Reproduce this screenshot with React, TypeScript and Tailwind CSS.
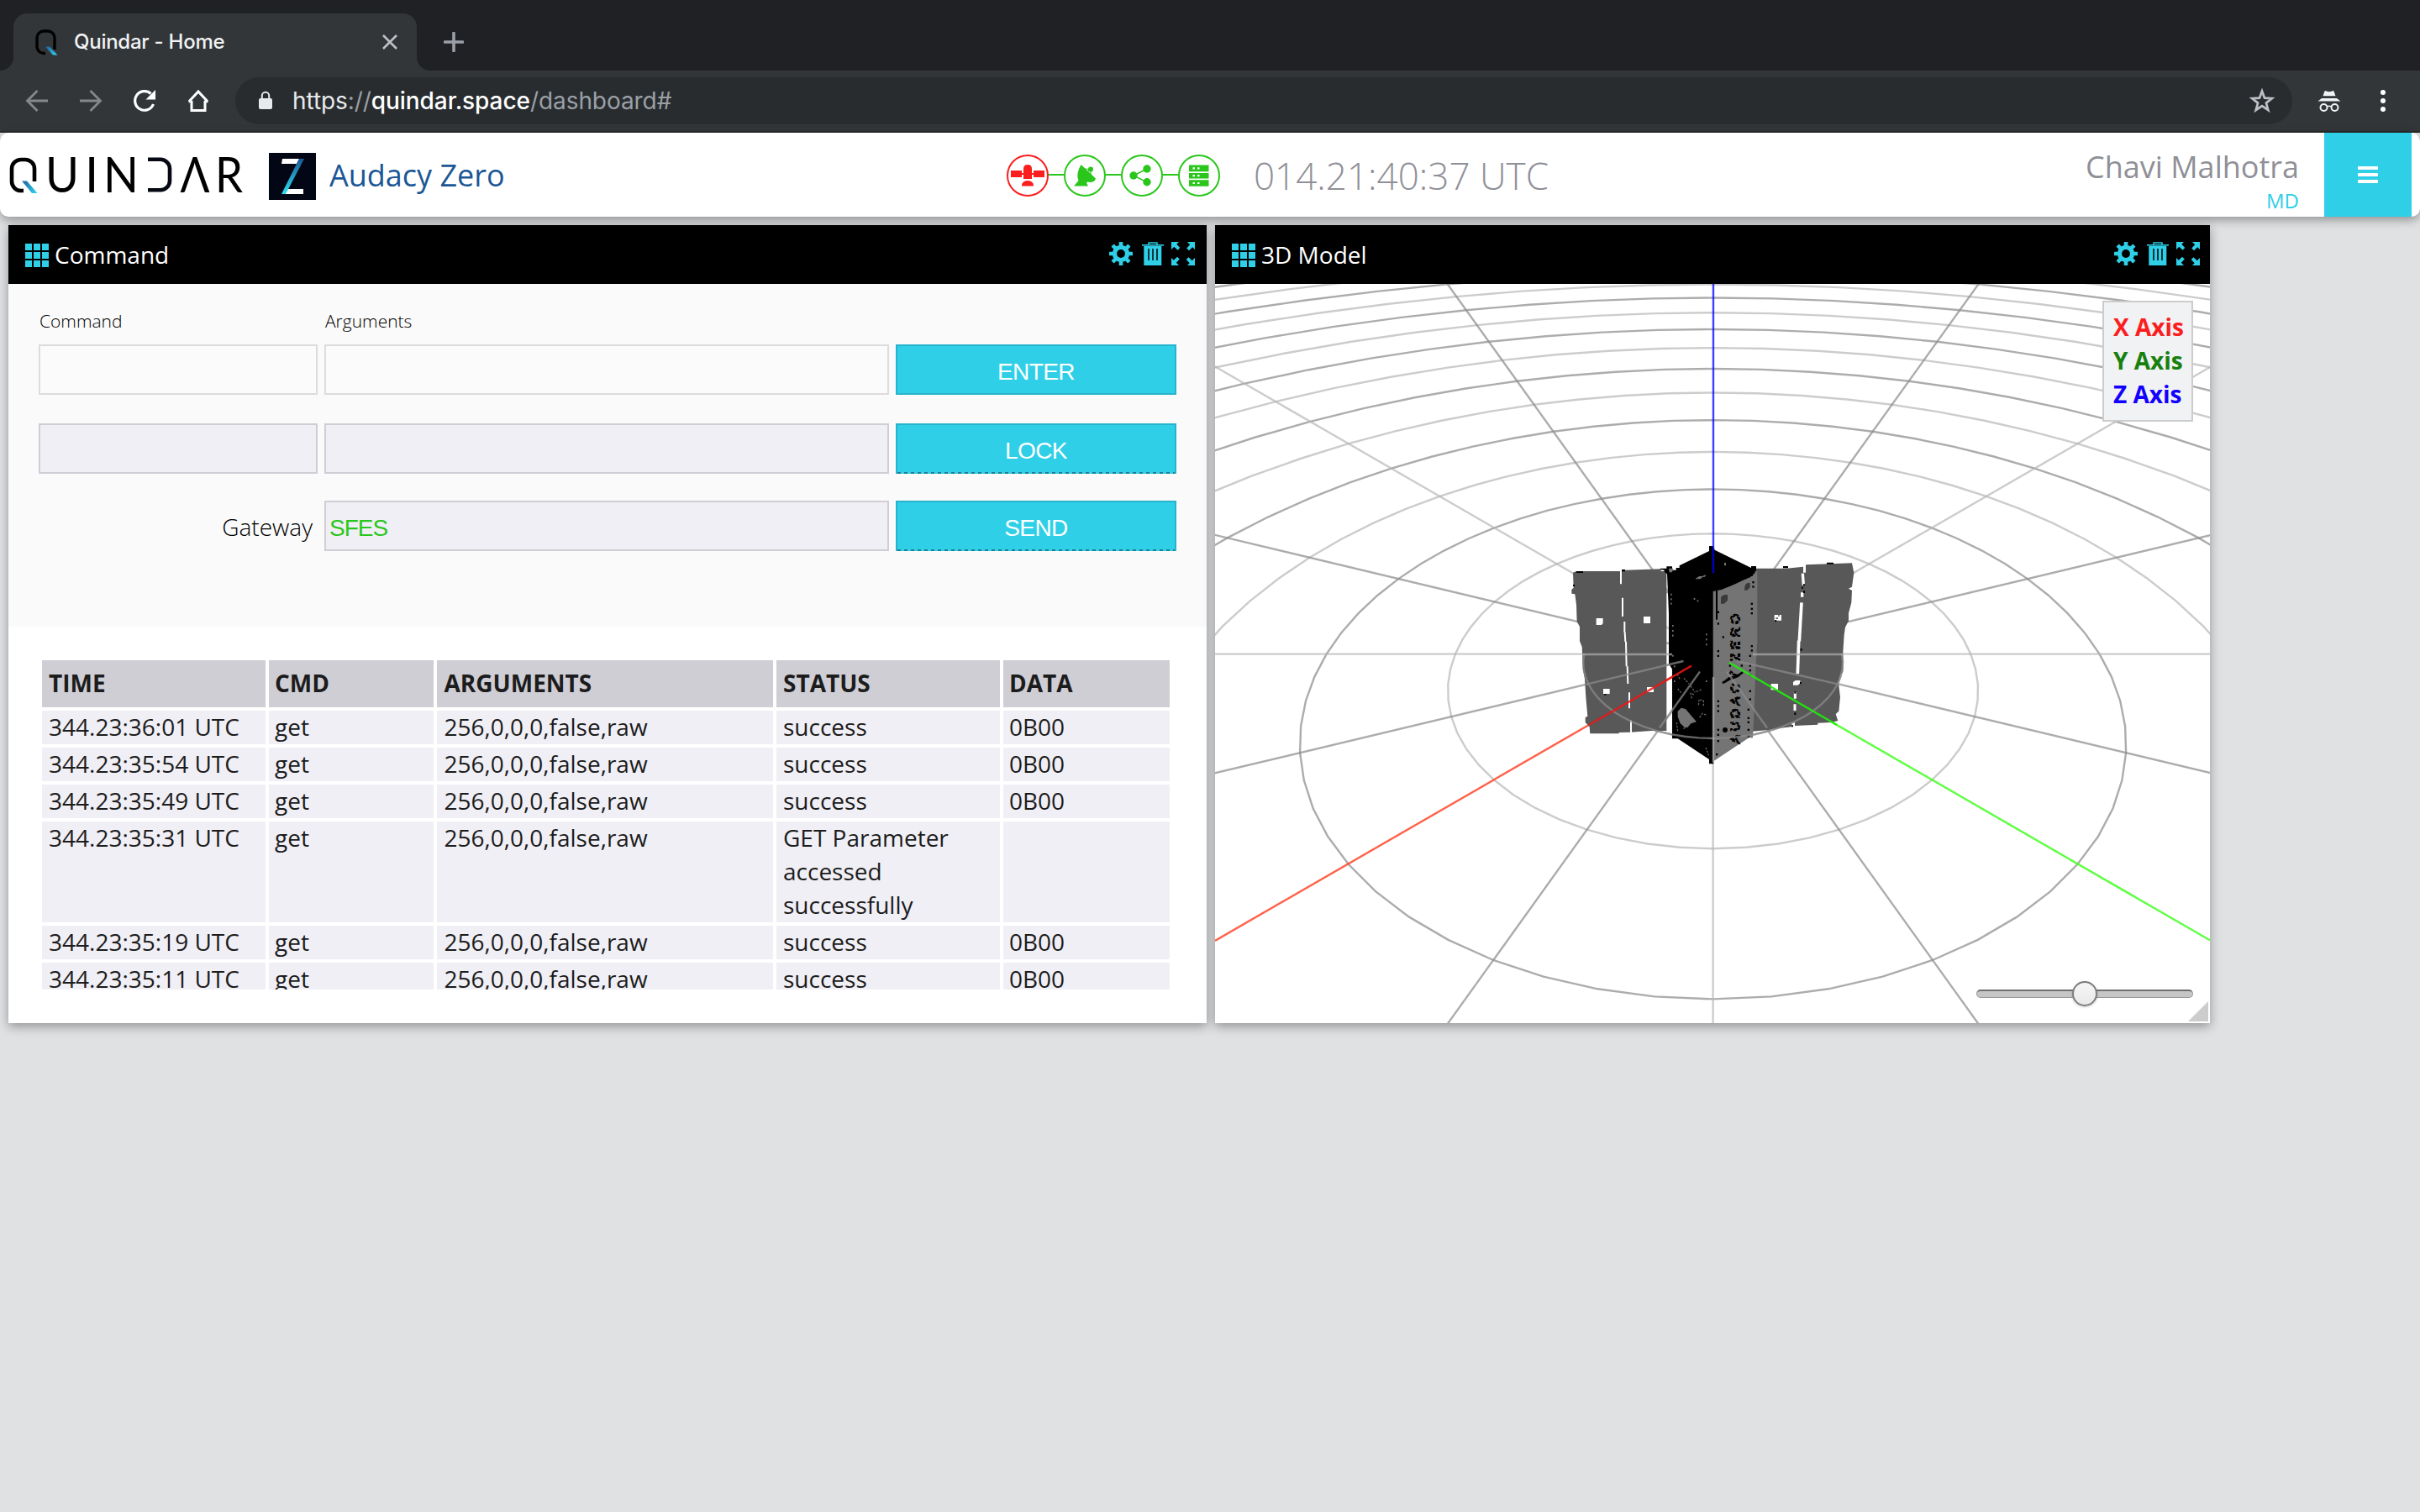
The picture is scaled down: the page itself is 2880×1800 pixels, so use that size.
import React from "react";

const CYAN = "#2fcfe8";

/* ---------- browser chrome ---------- */

function BrowserChrome() {
  return (
    <div className="flex h-[158px] flex-col border-b-2 border-[#27292b] bg-[#323639] font-[Inter,sans-serif]">
      <div className="flex h-[84px] items-end bg-[#202124]">
        <div className="h-4 w-4 bg-[#323639]">
          <div className="h-4 w-4 rounded-br-[16px] bg-[#202124]" />
        </div>
        <div className="flex h-[68px] w-[480px] items-center rounded-t-[16px] bg-[#323639] pl-[24px] pr-[22px]">
          <svg width="30" height="32" viewBox="0 0 30 32">
            <defs>
              <linearGradient id="tail" x1="0" y1="0" x2="1" y2="1">
                <stop offset="0" stopColor="#1d5f9f" />
                <stop offset="1" stopColor="#2fd8f0" />
              </linearGradient>
            </defs>
            <path
              d="M14 29.5h-2a8 8 0 0 1-8-8V11a8 8 0 0 1 8-8h5a8 8 0 0 1 8 8v14"
              fill="none"
              stroke="#000"
              strokeWidth="3.4"
            />
            <path d="M14 21.5h5l9.500 10h-5.500z" fill="url(#tail)" />
          </svg>
          <span className="ml-[18px] text-[24px] font-medium tracking-[-0.25px] text-[#f1f3f4]">Quindar - Home</span>
          <svg className="ml-auto" width="20" height="20" viewBox="0 0 20 20">
            <path d="M2 2l16 16M18 2L2 18" stroke="#bdc1c6" strokeWidth="2.6" />
          </svg>
        </div>
        <div className="h-4 w-4 bg-[#323639]">
          <div className="h-4 w-4 rounded-bl-[16px] bg-[#202124]" />
        </div>
        <svg className="mb-[22px] ml-4" width="24" height="24" viewBox="0 0 24 24">
          <path d="M12 1.500v21M1.500 12h21" stroke="#9aa0a6" strokeWidth="3.600" strokeLinecap="round" />
        </svg>
      </div>
      <div className="flex h-[72px] items-center">
        <div className="flex w-[280px] gap-[36px] pl-[30px]">
          <svg width="28" height="28" viewBox="0 0 28 28" fill="none" stroke="#85888b" strokeWidth="2.800">
            <path d="M27 14H3M14.500 2L2.500 14l12 12" />
          </svg>
          <svg width="28" height="28" viewBox="0 0 28 28" fill="none" stroke="#85888b" strokeWidth="2.800">
            <path d="M1 14h24M13.500 2l12 12-12 12" />
          </svg>
          <svg width="28" height="28" viewBox="0 0 28 28">
            <path d="M24.500 18A11.300 11.300 0 1 1 21.500 5.500" fill="none" stroke="#fff" strokeWidth="3.200" />
            <path d="M27 1v11.500H15.500z" fill="#fff" />
          </svg>
          <svg width="28" height="28" viewBox="0 0 28 28" fill="none" stroke="#fff" strokeWidth="3">
            <path d="M6 14v11.500h16V14M2.500 14.800h4M21.500 14.800h4M3 14.800L14 3l11 11.800" />
          </svg>
        </div>
        <div className="flex h-[56px] w-[2448px] items-center rounded-full bg-[#282c2f] pl-[27px] pr-[20px]">
          <svg width="18" height="24" viewBox="0 0 18 24">
            <rect x="1" y="9" width="16" height="13" rx="2" fill="#e8eaed" />
            <path d="M4.800 10V6a4.200 4.200 0 0 1 8.400 0v4" fill="none" stroke="#e8eaed" strokeWidth="2" />
          </svg>
          <div className="ml-[23px] text-[28px] tracking-[-0.07px] text-[#9aa0a6]">
            <span className="text-[#e8eaed]">https</span>://
            <span className="font-medium text-white">quindar.space</span>/dashboard#
          </div>
          <svg className="ml-auto" width="32" height="32" viewBox="0 0 32 32">
            <path
              d="M16 4.500l3 8.200 8.800.4-6.900 5.500 2.400 8.400L16 22.200 8.700 27l2.400-8.400-6.900-5.500 8.800-.4z"
              fill="none"
              stroke="#bdc1c6"
              strokeWidth="2.700"
            />
          </svg>
        </div>
        <svg className="ml-[30px]" width="28" height="28" viewBox="0 0 28 28">
          <path d="M8.500 2.500q1-1 2 0q3.500 1.400 7 0q1-1 2 0l2 5.700h-15z" fill="#f1f3f4" />
          <path d="M5 11h18l4.500 3.500H.5z" fill="#f1f3f4" />
          <circle cx="7.500" cy="22" r="4" fill="none" stroke="#f1f3f4" strokeWidth="2" />
          <circle cx="20.500" cy="22" r="4" fill="none" stroke="#f1f3f4" strokeWidth="2" />
          <path d="M11 21q3-1.500 6 0" fill="none" stroke="#f1f3f4" strokeWidth="1.600" />
        </svg>
        <div className="ml-[47px] flex flex-col gap-1">
          <div className="h-[6px] w-[6px] rounded-full bg-white" />
          <div className="h-[6px] w-[6px] rounded-full bg-white" />
          <div className="h-[6px] w-[6px] rounded-full bg-white" />
        </div>
      </div>
    </div>
  );
}

/* ---------- application header ---------- */

function QuindarLogo() {
  return (
    <svg
      width="282"
      height="50"
      viewBox="8 184 282 50"
      className="block overflow-visible"
      fontFamily="Lato, sans-serif"
      fontSize="58"
    >
      <defs>
        <linearGradient id="qtail" x1="0" y1="0" x2="1" y2="1">
          <stop offset="0" stopColor="#1d5f9f" />
          <stop offset="1" stopColor="#2fd8f0" />
        </linearGradient>
      </defs>
      <path
        d="M28 227h-3a11 11 0 0 1-11-11V201a11 11 0 0 1 11-11h5a11 11 0 0 1 11 11v15"
        fill="none"
        stroke="#000"
        strokeWidth="4.600"
      />
      <path d="M26 215.500h6l12.500 14.500h-6.500z" fill="url(#qtail)" />
      <text x="54" y="229" textLength="40" lengthAdjust="spacingAndGlyphs">U</text>
      <text x="101" y="229">I</text>
      <text x="123" y="229" textLength="42" lengthAdjust="spacingAndGlyphs">N</text>
      <path d="M176 189.800h15a11 11 0 0 1 11 11v14.400a11 11 0 0 1-11 11h-15" fill="none" stroke="#060913" strokeWidth="4.600" />
      <text x="214.500" y="229" textLength="35" lengthAdjust="spacingAndGlyphs">Λ</text>
      <text x="256" y="229" textLength="33" lengthAdjust="spacingAndGlyphs">R</text>
    </svg>
  );
}

function ZeroLogo() {
  return (
    <svg width="56" height="56" viewBox="0 0 56 56" className="block">
      <defs>
        <linearGradient id="zbar" x1="0" y1="1" x2="0" y2="0">
          <stop offset="0" stopColor="#2fe0f2" />
          <stop offset="1" stopColor="#1b5796" />
        </linearGradient>
      </defs>
      <rect width="56" height="56" fill="#030615" />
      <path d="M16 7h20l-3 6H15zM22 43h19v6H19z" fill="#fff" />
      <path d="M36 7h6L20 49h-5z" fill="url(#zbar)" />
    </svg>
  );
}

function StatusDot({ red, children }: { red?: boolean; children: React.ReactNode }) {
  return (
    <div
      className={
        red
          ? "h-[50px] w-[50px] rounded-full border-2 border-[#fb1e1e] text-[#fb1e1e]"
          : "h-[50px] w-[50px] rounded-full border-2 border-[#2ac61c] text-[#2ac61c]"
      }
    >
      <svg width="46" height="46" viewBox="2 2 46 46" fill="currentColor" stroke="none">
        {children}
      </svg>
    </div>
  );
}

function Link() {
  return <div className="mb-[2px] h-[2px] w-[18px] bg-[#2ac61c]" />;
}

function AppHeader() {
  return (
    <header className="relative flex h-[100px] rounded-[10px] bg-white shadow-[0_4px_12px_rgba(0,0,0,0.35)]">
      <div className="flex w-[1198px] items-start pl-2">
        <div className="mt-[26px]"><QuindarLogo /></div>
        <div className="ml-[30px] mt-6"><ZeroLogo /></div>
        <span className="ml-4 mt-[26px] text-[36px] leading-[50px] text-[#1b5796]">Audacy Zero</span>
      </div>
      <div className="mt-[26px] flex h-[50px] items-center">
        <StatusDot red>
          <path d="M5 19h13v3h2v-5q0-5 5-5t5 5v5h2v-3h13v8H32v-3h-2v5H20v-5h-2v3H5z" />
          <path d="M18 37.500q0-6.500 7-6.500t7 6.500z" />
        </StatusDot>
        <Link />
        <StatusDot>
          <path d="M20.500 12L38 28.500Q37 33 31 33q-1.500 0-2.500-.4l-1.500.9 2 4H12l5.500-6.500Q14 23 20.500 12z" />
          <circle cx="32" cy="17.500" r="3" />
          <path d="M27 22l5-5v9M24 17l7 .5" stroke="currentColor" strokeWidth="1.200" fill="none" />
        </StatusDot>
        <Link />
        <StatusDot>
          <circle cx="15" cy="25" r="4.700" />
          <circle cx="31" cy="17" r="4.700" />
          <circle cx="31" cy="32.800" r="4.700" />
          <path d="M31 17L15 25l16 7.800" stroke="currentColor" strokeWidth="1.500" fill="none" />
        </StatusDot>
        <Link />
        <StatusDot>
          <path d="M13 12.500h23.500v7.700H13zM13 22h23.500v6.500H13zM13 30.300h23.500v7.500H13z" />
          <path
            d="M17.500 16.300h2.500M23 16.300h2.500M17.500 25.200h2.500M23 25.200h2.500M17.500 34h2.500M23 34h2.500"
            stroke="#fff"
            strokeWidth="2.200"
          />
        </StatusDot>
      </div>
      <span className="ml-[40px] mt-[21px] text-[44px] font-light leading-[60px] text-[#8f8f97]">014.21:40:37 UTC</span>
      <div className="ml-auto mr-[30px] mt-[16px] flex flex-col items-end">
        <span className="text-[36px] leading-[50px] text-[#8f8f97]">Chavi Malhotra</span>
        <span className="-mt-px text-[24px] leading-[32px] text-[#2fcfe8]">MD</span>
      </div>
      <div className="mr-[10px] flex h-[100px] w-[104px] flex-col items-center justify-center gap-1 bg-[#2fcfe8]">
        <div className="h-1 w-6 rounded-[1px] bg-white" />
        <div className="h-1 w-6 rounded-[1px] bg-white" />
        <div className="h-1 w-6 rounded-[1px] bg-white" />
      </div>
    </header>
  );
}

/* ---------- panels ---------- */

function PanelBar({ title, tight }: { title: string; tight?: boolean }) {
  return (
    <div className={tight ? "flex h-[70px] items-start bg-black pl-5 pr-3" : "flex h-[70px] items-start bg-black pl-5 pr-[14px]"}>
      <div className="mt-[22px] grid grid-cols-3 gap-[2px]">
        {Array.from({ length: 9 }, (_, i) => (
          <div key={i} className="h-2 w-2 bg-[#2fcfe8]" />
        ))}
      </div>
      <span className="ml-[7px] mt-[15px] text-[28px] leading-[40px] text-white">{title}</span>
      <div className="ml-auto mt-5 flex items-start text-[#2fcfe8]">
        <svg width="28" height="28" viewBox="-14 -14 28 28" fill={CYAN}>
          {[0, 45, 90, 135].map((a) => (
            <rect key={a} x="-2.300" y="-14" width="4.600" height="28" rx="0.500" transform={`rotate(${a})`} />
          ))}
          <circle r="10.200" />
          <circle r="4.900" fill="#000" />
        </svg>
        <svg className="ml-[11px]" width="26" height="28" viewBox="0 0 26 28" fill={CYAN}>
          <path d="M8 3V1h10v2" fill="none" stroke={CYAN} strokeWidth="1.400" />
          <rect x="0" y="3" width="26" height="1.600" />
          <rect x="2.300" y="5" width="21" height="23" />
          <path d="M8 8v14M13 8v14M18 8v14" stroke="#000" strokeWidth="1.500" />
        </svg>
        <svg className="ml-[9px]" width="28" height="28" viewBox="0 0 28 28" fill={CYAN}>
          {[0, 90, 180, 270].map((a) => (
            <path key={a} d="M0 0h9L6.300 2.800l4 4.200-2.800 2.800-4.200-4L0 9z" transform={`rotate(${a} 14 14)`} />
          ))}
        </svg>
      </div>
    </div>
  );
}

function CommandButton({ label, dotted }: { label: string; dotted?: boolean }) {
  return (
    <div
      className={
        dotted
          ? "flex h-[60px] w-[334px] flex-col border-x-2 border-t-2 border-[#27b3cc] bg-[#2fcfe8]"
          : "flex h-[60px] w-[334px] flex-col border-2 border-[#27b3cc] bg-[#2fcfe8]"
      }
    >
      <span className="h-[56px] pt-[5px] text-center font-['Liberation_Sans',sans-serif] text-[28px] leading-[51px] tracking-[-0.6px] text-white">
        {label}
      </span>
      {dotted && (
        <div className="h-[2px] w-full bg-[repeating-linear-gradient(90deg,#1f7f92_0px,#1f7f92_4px,#2fcfe8_4px,#2fcfe8_8px)]" />
      )}
    </div>
  );
}

function CommandForm() {
  return (
    <div className="flex h-[408px] flex-col bg-[#fafafa] pl-9 pt-[28px] text-black">
      <div className="flex text-[21px] font-light leading-[32px]">
        <span className="w-[340px] pl-px">Command</span>
        <span className="pl-px">Arguments</span>
      </div>
      <div className="mt-3 flex gap-2">
        <div className="h-[60px] w-[332px] border-2 border-[#dcdcdc] bg-[#fbfbfb]" />
        <div className="h-[60px] w-[672px] border-2 border-[#dcdcdc] bg-[#fbfbfb]" />
        <CommandButton label="ENTER" />
      </div>
      <div className="mt-[34px] flex gap-2">
        <div className="h-[60px] w-[332px] border-2 border-[#cfced5] bg-[#f0eff5]" />
        <div className="h-[60px] w-[672px] border-2 border-[#cfced5] bg-[#f0eff5]" />
        <CommandButton label="LOCK" dotted />
      </div>
      <div className="mt-[32px] flex gap-2">
        <div className="w-[332px] pr-[6px] pt-[11px] text-right text-[28px] font-light leading-[40px]">Gateway</div>
        <div className="h-[60px] w-[672px] border-2 border-[#cfced5] bg-[#f0eff5] pl-1 pt-[5px] font-['Liberation_Sans',sans-serif] text-[28px] leading-[51px] tracking-[-1px] text-[#2ac61c]">
          SFES
        </div>
        <CommandButton label="SEND" dotted />
      </div>
    </div>
  );
}

const rows: [string, string][] = [
  ["344.23:36:01 UTC", "success"],
  ["344.23:35:54 UTC", "success"],
  ["344.23:35:49 UTC", "success"],
  ["344.23:35:31 UTC", "GET Parameter accessed successfully"],
  ["344.23:35:19 UTC", "success"],
  ["344.23:35:11 UTC", "success"],
];

const cellPadding = ["pl-2", "pl-[7px]", "pl-[8.5px]", "pl-2 pr-8", "pl-[7px]"];

function CommandLog() {
  return (
    <div className="h-[472px] bg-white pl-10 pt-[40px]">
      <div className="grid h-[392px] w-[1342px] grid-cols-[266px_196px_400px_266px_198px] content-start gap-1 overflow-hidden text-[28px] leading-[40px] text-[#1c1c1c]">
        {["TIME", "CMD", "ARGUMENTS", "STATUS", "DATA"].map((h, i) => (
          <div key={h} className={`h-[56px] bg-[#cfced5] pt-[7px] font-bold ${cellPadding[i]}`}>{h}</div>
        ))}
        {rows.map(([time, status]) =>
          [time, "get", "256,0,0,0,false,raw", status, status === "success" ? "0B00" : ""].map((cell, i) => (
            <div key={`${time}-${i}`} className={`bg-[#f0eff5] pb-px ${cellPadding[i]}`}>
              <div className="-mt-px min-h-[40px]">{cell}</div>
            </div>
          ))
        )}
      </div>
    </div>
  );
}

/* ---------- 3D scene ---------- */

const CX = 592.6;
const CY = 440.6;
const FOCAL = 1062.3;
const SIN = 0.57735;
const COS = 0.8165;
const STEP = 0.144338;

function project(u: number, v: number) {
  const d = 1 - v * COS;
  return [CX + (FOCAL * u) / d, CY + (FOCAL * SIN * v) / d];
}

/* Ring as a 64-sided polygon, split where it would pass behind the camera. */
function ringPath(k: number, from = 0, to = 64) {
  let d = "";
  let open = false;
  for (let i = from; i <= to; i++) {
    const a = (i / 64) * Math.PI * 2;
    const u = k * STEP * Math.cos(a);
    const v = k * STEP * Math.sin(a);
    if (v * COS > 0.9) {
      open = false;
      continue;
    }
    const [x, y] = project(u, v);
    d += `${open ? "L" : "M"}${x.toFixed(1)} ${y.toFixed(1)}`;
    open = true;
  }
  return d;
}

const DARK = { stroke: "#8c8c8c", strokeOpacity: 0.72 };
const LIGHT = { stroke: "#b4b4b4", strokeOpacity: 0.68 };

function ray(deg: number, len: number) {
  const a = (deg * Math.PI) / 180;
  return [CX + Math.cos(a) * len, CY + Math.sin(a) * SIN * len];
}

function Satellite() {
  const dots: [number, number][] = [
    [417, 233], [417, 250], [417, 266], [423, 345], [423, 363], [423, 380], [543, 376], [543, 394], [543, 412],
    [423, 452], [429, 490], [429, 543], [543, 543], [500, 249], [512, 256],
  ];
  const holes: [number, number][] = [
    [710, 190], [710, 206], [705, 267], [705, 285], [705, 301], [585, 338], [603, 386], [585, 436], [585, 453],
    [705, 418], [705, 434], [699, 453], [699, 488], [699, 505], [699, 520], [699, 579], [699, 608], [585, 615],
    [585, 632], [585, 650], [585, 717], [585, 735], [585, 757], [693, 645], [693, 675], [693, 690], [693, 717],
    [693, 740], [669, 488], [585, 297], [603, 548], [609, 717], [580, 805], [627, 488], [627, 515],
  ];
  return (
    <g transform="translate(404 292) scale(0.33333)">
      <path
        fill="#585858"
        d="M66 155L78 150H400V720L345 720 270 725 230 726V730H127L125 706 110 690V672L118 668 112 600 108 535 102 500 98 420 90 400 90 348 80 330 78 270 73 232 61 230V215L68 210z"
      />
      <path
        fill="#585858"
        d="M716 140H828L888 134V155H897V127L1062 121 1069 155 1062 206 1050 212 1062 219 1060 262 1050 300V327L1038 350 1034 378 1030 440 1030 510 1020 520 1014 550 1020 600 1015 650 1004 660 1012 684 990 690 940 692V698L858 702V690H848L845 706 800 711 765 717 705 722z"
      />
      <path fill="#000" d="M78 150h24v6h-24zM240 144h12v7h-12zM816 132h18v7h-18zM972 119h24v6h-24zM66 198h6v6h-6z" />
      <path fill="#585858" d="M252 146L380 142V160H252z" />
      <g stroke="#fff" strokeWidth="7" fill="none">
        <path d="M237 150V196M243 245V312M250 330V368M251 368L253 402M255 402L257 490M260 490L262 552M267 583V640M273 683V727" strokeWidth="6" />
        <path d="M886 158L889 200M884 226V242" strokeWidth="10" />
        <path d="M882 262L874 400" strokeWidth="11" />
        <path d="M872 398L868 516" strokeWidth="11" />
        <path d="M859 582V605M858 625V648" strokeWidth="9" />
      </g>
      <path fill="#fff" d="M149 318h24v18l-5 6h-19zM318 312h24v24h-24zM174 570h23v18h-23zM330 564h24v18h-24zM785 306h25v20h-25zM773 552h25v22h-25zM852 546l8-6h17v10l-8 7h-17z" />
      <path fill="#585858" d="M799 306h4v6h-4zM790 316h8v5h-8z" />
      <path fill="#000" d="M888 196h6v6h-6zM882 206h6v6h-6zM888 220h6v8h-6zM878 426h6v8h-6zM856 580h6v7h-6zM856 655h6v8h-6zM876 546h5v7h-5zM786 325h7v5h-7zM178 588h6v5h-6zM846 700h6v6h-6z" />
      {/* bus */}
      <path
        fill="#000"
        d="M402 160L392 152V146L378 144V140H400V133H420V146H434V138H446V130L552 78V60H566L572 74 702 138V132H720V158L724 164 600 226H568V838H552V822L440 748H420V500L408 480V300z"
      />
      <path
        fill="#747474"
        d="M566 222L595 216 620 206 645 196 670 184 700 170 716 156V150H724V400L718 500 714 620 708 745H694L572 826H566z"
      />
      <path fill="none" stroke="#000" strokeWidth="6" strokeDasharray="6 6" d="M592 214L712 162" />
      <path fill="#000" d="M576 218h6v105h-6z" />
      <path fill="#747474" d="M408 140h16l-4 14h-10zM503 176l14-8h10l14-6-4 8h-8l-8 8h-16zM606 120h6v10h-6z" />
      <path fill="#3a3a3a" d="M594 242l12-8h12v20l-12 12h-12zM680 200l8-8h10v16l-10 10h-10z" />
      <path fill="#747474" d="M440 650l12-12 16 4 22 26 17 20-20 6-12 14h-10l-16-14-9-24z" />
      <g fill="#747474">
        {dots.map(([x, y]) => (
          <rect key={`${x}-${y}`} x={x - 3} y={y - 3} width="5" height="6" />
        ))}
      </g>
      <g fill="none" stroke="#666" strokeWidth="4" strokeDasharray="7 5">
        <path d="M438 518l10 18M462 532l18 20M440 570l12 14M486 560l16 22M490 604l-4-18 16 6M514 628l2-20 16 4v22M506 580l22-8M518 672l10-14 14 6M436 690l4 32M460 712l12-6M540 780l10 28" />
      </g>
      <g fill="#000">
        {holes.map(([x, y]) => (
          <rect key={`${x}-${y}`} x={x - 4} y={y - 4} width="7" height="7" />
        ))}
        <path d="M600 546l22-18 24-4 24-16 4 6-22 16-24 8-20 12z" />
        <circle cx="609" cy="717" r="9" />
      </g>
      <text
        transform="translate(659 765) rotate(-90)"
        fontFamily="Liberation Sans, sans-serif"
        fontSize="46"
        fill="none"
        stroke="#000"
        strokeWidth="6"
        strokeDasharray="12 6"
        textLength="462"
        lengthAdjust="spacing"
      >
        AUDACY ZERO
      </text>
    </g>
  );
}

function Scene() {
  const far = 1100;
  const rays = Array.from({ length: 16 }, (_, i) => i * 22.5);
  const front = ringPath(1, 0, 32);
  return (
    <svg width="1184" height="880" viewBox="0 0 1184 880" className="block bg-white" fill="none" strokeWidth="2.400">
      {Array.from({ length: 18 }, (_, i) => i + 1).map((k) => (
        <path key={k} d={ringPath(k, 0, 64)} {...(k % 2 ? DARK : LIGHT)} />
      ))}
      {rays
        .filter((a) => a !== 45 && a !== 135 && a !== 270)
        .map((a) => {
          const [x, y] = ray(a, far);
          return <line key={a} x1={CX} y1={CY} x2={x} y2={y} {...((a / 22.5) % 2 ? DARK : LIGHT)} />;
        })}
      <line x1="560" y1="458.600" x2="0" y2="781.900" stroke="#ff3a1c" strokeOpacity="0.800" />
      <line x1="625" y1="458.600" x2="1184" y2="781.300" stroke="#35ff10" strokeOpacity="0.800" />
      <Satellite />
      <path d={front} {...DARK} />
      <path d="M437 441H544M640 441H748" {...LIGHT} />
      <path d="M557.500 449L440 477.100M621 449L741 476.300" {...DARK} />
      <path d="M577 461.500L529 528.500M609 461.500L657 528.500" {...DARK} />
      <line x1="593" y1="468" x2="593" y2="570" {...LIGHT} />
      <line x1="567" y1="454.600" x2="445" y2="525" stroke="#f01414" strokeOpacity="0.850" />
      <line x1="612" y1="451" x2="740" y2="525" stroke="#1ef00a" strokeOpacity="0.900" />
      <line x1="593" y1="0" x2="593" y2="344" stroke="#0000ff" strokeOpacity="0.750" />
    </svg>
  );
}

function ModelView() {
  return (
    <div className="relative h-[880px] w-[1184px] overflow-hidden">
      <Scene />
      <div className="absolute right-5 top-5 flex h-[144px] w-[108px] flex-col border-2 border-[#ccc] bg-[#f1f2f4] pl-[11px] pt-[9px] text-[28px] font-bold leading-[40px]">
        <span className="whitespace-nowrap text-[#fb1e1e]">X Axis</span>
        <span className="whitespace-nowrap text-[#17800f]">Y Axis</span>
        <span className="whitespace-nowrap text-[#1200ff]">Z Axis</span>
      </div>
      <div className="absolute bottom-5 right-5 flex h-[30px] w-[258px] items-center justify-center">
        <div className="absolute inset-x-0 top-[10px] h-[10px] rounded-[5px] border border-t-2 border-[#9a9a9a] border-t-[#707070] bg-[#c6c6c6]" />
        <div className="relative h-[30px] w-[30px] rounded-full border-2 border-[#7c7c7c] bg-linear-to-b from-[#f6f6f6] to-[#e9e9e9] shadow-[0_1px_3px_rgba(0,0,0,0.2)]" />
      </div>
      <svg className="absolute bottom-[2px] right-[2px]" width="24" height="24" viewBox="0 0 24 24">
        <path d="M24 0v24H0z" fill="#ccc" />
      </svg>
    </div>
  );
}

export default function App() {
  return (
    <div className="h-[1800px] w-[2880px] overflow-hidden bg-[#dfe1e3] font-['Open_Sans','Noto_Sans',sans-serif]">
      <BrowserChrome />
      <AppHeader />
      <main className="flex gap-[10px] px-[10px] pt-[10px]">
        <section className="relative h-[950px] w-[1426px] shadow-[0_4px_12px_rgba(0,0,0,0.35)]">
          <PanelBar title="Command" />
          <CommandForm />
          <CommandLog />
        </section>
        <section className="relative h-[950px] w-[1184px] shadow-[0_4px_12px_rgba(0,0,0,0.35)]">
          <PanelBar title="3D Model" tight />
          <ModelView />
        </section>
      </main>
    </div>
  );
}
